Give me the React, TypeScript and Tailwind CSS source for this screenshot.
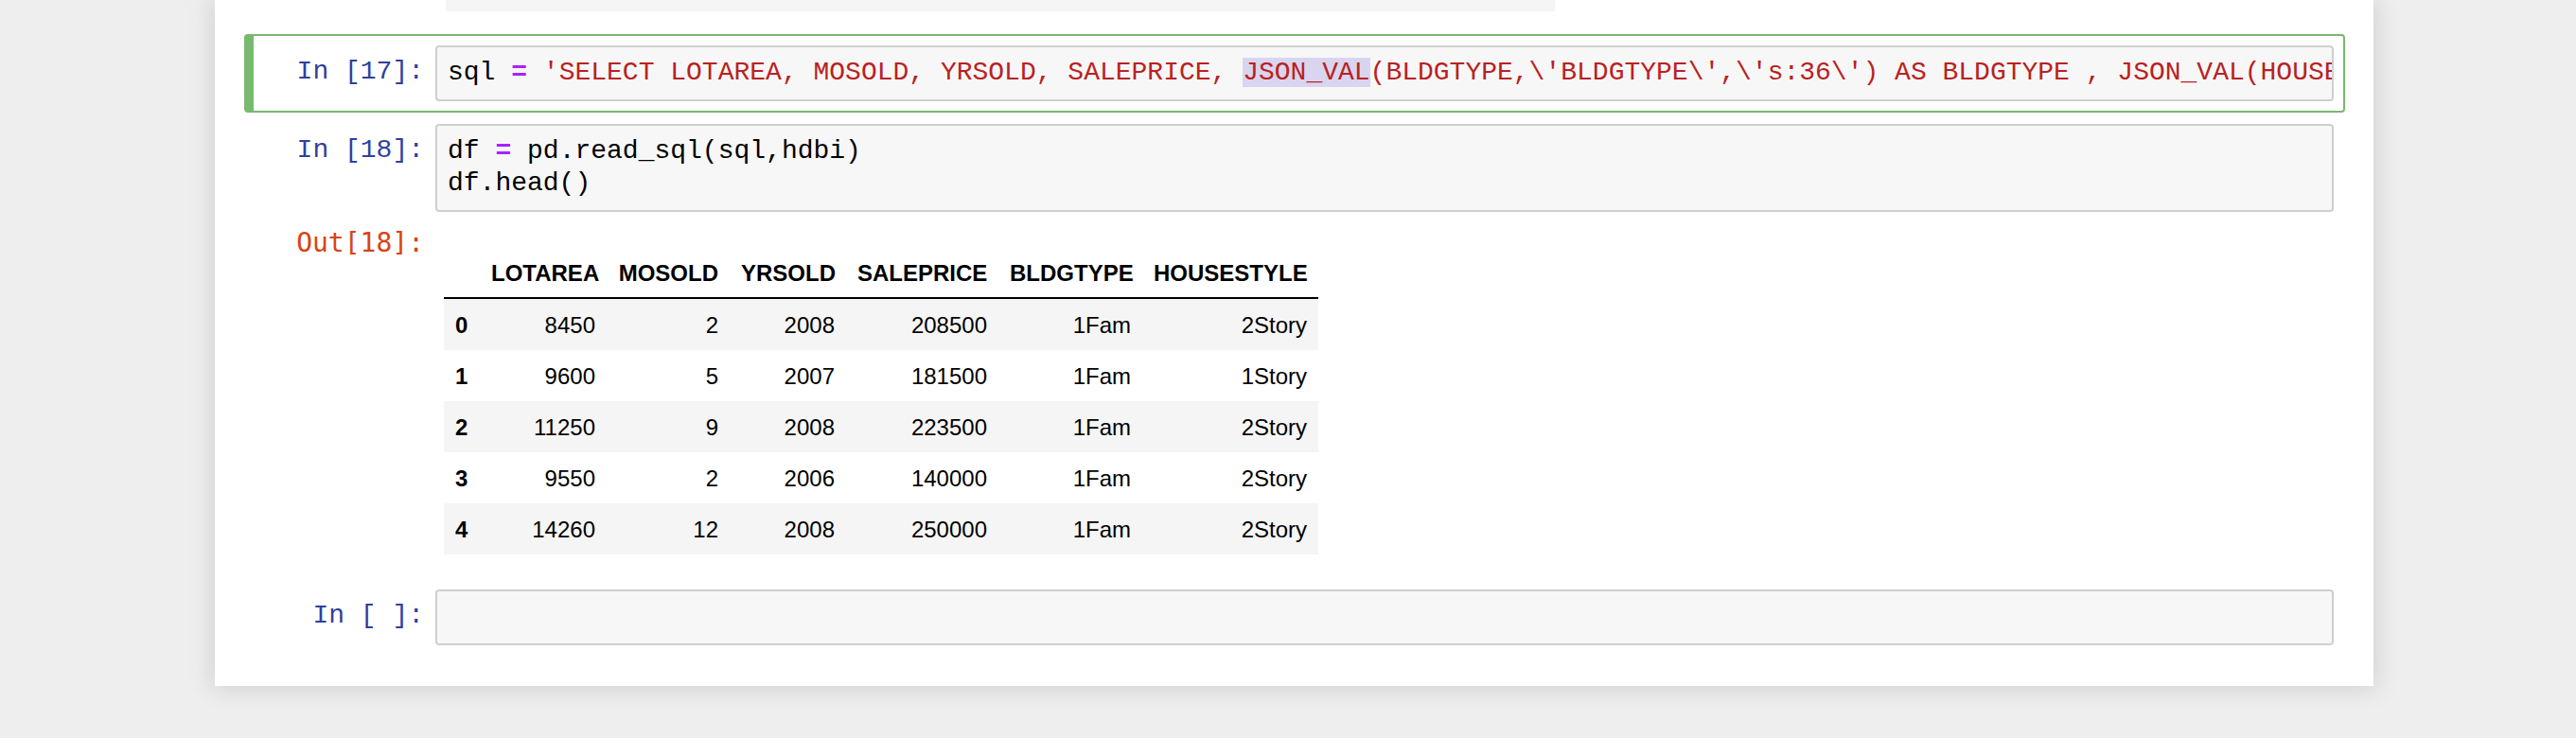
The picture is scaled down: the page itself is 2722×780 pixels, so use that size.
const mono = { fontFamily: '"Liberation Mono", "DejaVu Sans Mono", monospace' };

const Prompt = ({ label, out }: { label: string; out?: boolean }) => (
  <div
    className={
      out
        ? "w-[190px] shrink-0 pt-[10px] pr-[12px] text-right text-[28px] leading-[34px] text-[#d84315] font-['DejaVu_Sans_Mono',monospace]"
        : "w-[190px] shrink-0 pt-[11px] pr-[12px] text-right text-[28px] leading-[34px] text-[#303f9f] whitespace-pre"
    }
    style={out ? undefined : mono}
  >
    {label}
  </div>
);

const InputArea = ({ children }: { children?: React.ReactNode }) => (
  <div
    className="flex-1 min-w-0 overflow-hidden rounded-[4px] border-2 border-[#cfcfcf] bg-[#f7f7f7] pl-[11px] pt-[10px] pb-[11px] text-[28px] leading-[34px] text-black whitespace-pre"
    style={mono}
  >
    {children ?? <div className="h-[34px]" />}
  </div>
);

const Op = () => <span className="font-bold text-[#aa22ff]">=</span>;

const columns = [
  { name: "", w: "w-[38px]" },
  { name: "LOTAREA", w: "w-[134px]" },
  { name: "MOSOLD", w: "w-[130px]" },
  { name: "YRSOLD", w: "w-[123px]" },
  { name: "SALEPRICE", w: "w-[161px]" },
  { name: "BLDGTYPE", w: "w-[152px]" },
  { name: "HOUSESTYLE", w: "w-[186px]" },
];

const rows = [
  ["0", "8450", "2", "2008", "208500", "1Fam", "2Story"],
  ["1", "9600", "5", "2007", "181500", "1Fam", "1Story"],
  ["2", "11250", "9", "2008", "223500", "1Fam", "2Story"],
  ["3", "9550", "2", "2006", "140000", "1Fam", "2Story"],
  ["4", "14260", "12", "2008", "250000", "1Fam", "2Story"],
];

const DataFrame = () => (
  <table className="table-fixed border-collapse text-[24px] text-black font-['Liberation_Sans',Arial,sans-serif] w-[924px]">
    <colgroup>
      {columns.map((c, i) => (
        <col key={i} className={c.w} />
      ))}
    </colgroup>
    <thead>
      <tr className="border-b-2 border-black">
        {columns.map((c, i) => (
          <th key={i} className="px-[12px] pt-[13px] pb-[11px] leading-[28px] text-right font-bold whitespace-nowrap">
            {c.name}
          </th>
        ))}
      </tr>
    </thead>
    <tbody>
      {rows.map((r, ri) => (
        <tr key={ri} className={ri % 2 === 0 ? "bg-[#f5f5f5]" : "bg-white"}>
          {r.map((v, ci) =>
            ci === 0 ? (
              <th key={ci} className="px-[12px] pt-[13px] pb-[11px] leading-[30px] text-left font-bold">
                {v}
              </th>
            ) : (
              <td key={ci} className="px-[12px] pt-[13px] pb-[11px] leading-[30px] text-right whitespace-nowrap">
                {v}
              </td>
            )
          )}
        </tr>
      ))}
    </tbody>
  </table>
);

export default function App() {
  return (
    <div className="min-h-[780px] w-full overflow-hidden bg-[#eeeeee]">
      <div className="ml-[227px] w-[2281px] bg-white pb-[31px] shadow-[0_0_24px_2px_rgba(87,87,87,0.2)]">
        {/* tail of the previous output */}
        <div className="pl-[244px]">
          <div className="h-[12px] w-[1172px] bg-[#f5f5f5]" />
        </div>

        {/* selected cell, edit mode */}
        <div className="ml-[31px] mt-[24px] w-[2220px] rounded-[4px] border-2 border-l-[10px] border-[#79b86f] py-[10px] pl-[2px] pr-[10px]">
          <div className="flex">
            <Prompt label="In [17]:" />
            <InputArea>
              sql <Op />{" "}
              <span className="text-[#ba2121]">
                'SELECT LOTAREA, MOSOLD, YRSOLD, SALEPRICE, <span className="bg-[#d9d5f0]">JSON_VAL</span>
                (BLDGTYPE,\'BLDGTYPE\',\'s:36\') AS BLDGTYPE , JSON_VAL(HOUSESTYLE,\'HOUSESTYLE\',\'s:36\') AS HOUSESTYLE FROM HOUSING'
              </span>
            </InputArea>
          </div>
        </div>

        {/* cell with dataframe output */}
        <div className="ml-[31px] w-[2220px] border-2 border-transparent p-[10px]">
          <div className="flex">
            <Prompt label="In [18]:" />
            <InputArea>
              <div>
                df <Op /> pd.read_sql(sql,hdbi)
              </div>
              <div>df.head()</div>
            </InputArea>
          </div>
          <div className="mt-[6px] flex pb-[13px]">
            <Prompt label="Out[18]:" out />
            <div className="pt-[32px] pl-[9px]">
              <DataFrame />
            </div>
          </div>
        </div>

        {/* empty cell */}
        <div className="ml-[31px] w-[2220px] border-2 border-transparent p-[10px]">
          <div className="flex">
            <Prompt label="In [ ]:" />
            <InputArea />
          </div>
        </div>
      </div>
    </div>
  );
}
